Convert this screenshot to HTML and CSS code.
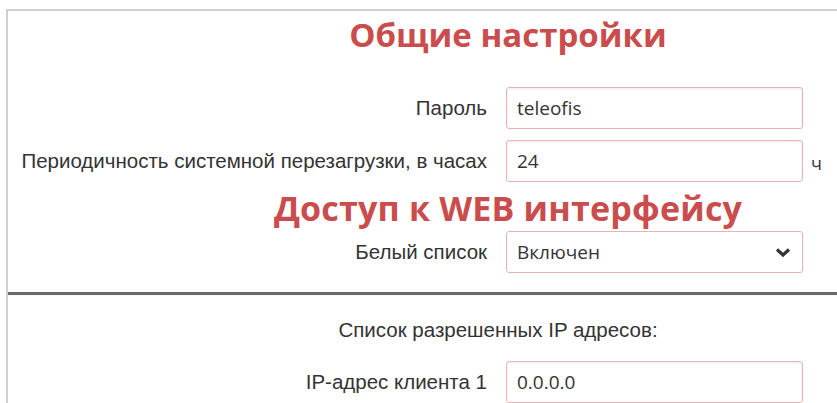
FILE: index.html
```html
<!DOCTYPE html>
<html lang="ru">
<head>
<meta charset="utf-8">
<title>Настройки</title>
<link rel="stylesheet" href="styles.css">
</head>
<body>
<div class="panel">
  <section class="block">
    <h2 class="title title-first">Общие настройки</h2>
    <div class="row">
      <label class="lbl">Пароль</label>
      <div class="field"><input class="inp" type="text" value="teleofis"></div>
      <span class="unit"></span>
    </div>
    <div class="row">
      <label class="lbl">Периодичность системной перезагрузки, в часах</label>
      <div class="field"><input class="inp" type="text" value="24"></div>
      <span class="unit">ч</span>
    </div>
    <h2 class="title title-second">Доступ к WEB интерфейсу</h2>
    <div class="row">
      <label class="lbl">Белый список</label>
      <div class="field select-wrap">
        <div class="inp sel">Включен
          <svg class="chev" width="16" height="11" viewBox="0 0 16 11"><path d="M2 2.5 L8 8 L14 2.5" fill="none" stroke="#333" stroke-width="3.2"/></svg>
        </div>
      </div>
      <span class="unit"></span>
    </div>
  </section>
  <hr class="sep">
  <section class="block block-ip">
    <p class="caption">Список разрешенных IP адресов:</p>
    <div class="row">
      <label class="lbl">IP-адрес клиента 1</label>
      <div class="field"><input class="inp" type="text" value="0.0.0.0"></div>
      <span class="unit"></span>
    </div>
  </section>
</div>
</body>
</html>
```
FILE: styles.css
```css
html, body {
  margin: 0;
  padding: 0;
  overflow: hidden;
  background: #fff;
}

body {
  font-family: "Liberation Sans", Arial, sans-serif;
  color: #333;
}

.panel {
  margin: 9px 0 0 6px;
  width: 1000px;
  height: 394px;
  border-top: 2px solid #d0d0d0;
  border-left: 2px solid #d0d0d0;
  overflow: hidden;
}

.title {
  margin: 0;
  text-align: center;
  font-family: "Open Sans", sans-serif;
  font-weight: 700;
  font-size: 33px;
  color: #cb4c4c;
}

.title-first {
  padding: 4px 0 0;
  line-height: 40px;
  margin-bottom: 32px;
}

.title-second {
  font-size: 34px;
  letter-spacing: 0.2px;
  line-height: 30px;
  margin: 10px 0 8px;
}

.row {
  display: grid;
  grid-template-columns: 479px 297px 40px;
  column-gap: 19px;
  align-items: center;
  margin-bottom: 11px;
}

.lbl {
  text-align: right;
  font-size: 20.5px;
}

.inp {
  box-sizing: border-box;
  width: 297px;
  height: 42px;
  padding: 0 10px;
  border: 1.5px solid #eab3b3;
  border-radius: 3px;
  box-shadow: inset 0 1px 3px rgba(0, 0, 0, 0.08);
  font-family: "Open Sans", sans-serif;
  font-size: 19px;
  color: #333;
  background: #fff;
  outline: none;
}

.sel {
  display: flex;
  align-items: center;
  justify-content: space-between;
  box-shadow: none;
  padding-right: 11px;
}

.chev {
  display: block;
}

.unit {
  margin-left: -11px;
  font-family: "Open Sans", sans-serif;
  font-size: 18px;
  padding-top: 4px;
}

.sep {
  margin: 19px 0 0;
  border: 0;
  height: 3px;
  background: #6a6a6a;
  box-shadow: 0 0 1px #aaa;
}

.caption {
  margin: 0;
  padding: 20px 0 0;
  width: 980px;
  text-align: center;
  font-size: 20.5px;
  line-height: 30px;
  margin-bottom: 16px;
}
```
